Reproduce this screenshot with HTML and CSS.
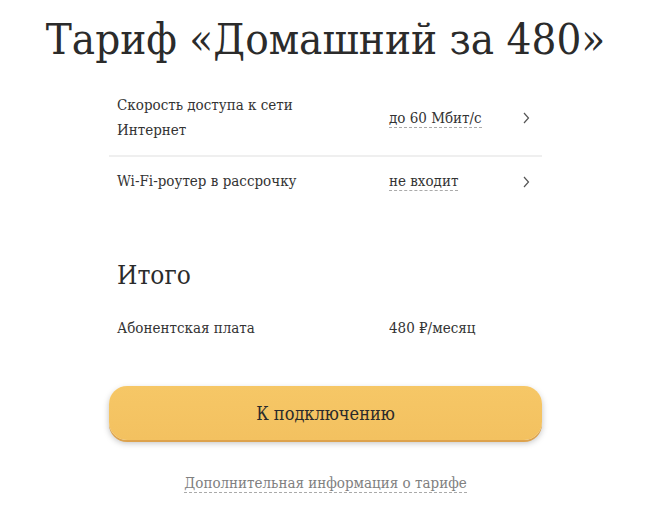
FILE: index.html
```html
<!DOCTYPE html>
<html lang="ru">
<head>
  <meta charset="UTF-8">
  <meta name="viewport" content="width=device-width, initial-scale=1.0">
  <title>Тариф «Домашний за 480»</title>
  <link rel="stylesheet" href="styles.css">
</head>
<body>
  <div class="tariff">
    <h1>Тариф «Домашний за 480»</h1>

    <div class="options">
      <div class="row">
        <span class="label">Скорость доступа к сети Интернет</span>
        <span class="value"><span class="dashed">до 60 Мбит/с</span></span>
        <svg class="chevron" width="8" height="12" viewBox="0 0 8 12"><path d="M2 1 L6.5 6 L2 11" fill="none" stroke="#555" stroke-width="1.2"/></svg>
      </div>
      <div class="row">
        <span class="label">Wi-Fi-роутер в рассрочку</span>
        <span class="value"><span class="dashed">не входит</span></span>
        <svg class="chevron" width="8" height="12" viewBox="0 0 8 12"><path d="M2 1 L6.5 6 L2 11" fill="none" stroke="#555" stroke-width="1.2"/></svg>
      </div>
    </div>

    <h2>Итого</h2>
    <div class="row total">
      <span class="label">Абонентская плата</span>
      <span class="value">480 ₽/месяц</span>
    </div>

    <button class="connect">К подключению</button>

    <div class="more"><a href="#">Дополнительная информация о тарифе</a></div>
  </div>
</body>
</html>
```

FILE: styles.css
```css
body {
  margin: 0;
  background: #fff;
  color: #333;
  font-family: "DejaVu Serif Condensed", "DejaVu Serif", serif;
}
.tariff {
  width: 433px;
  margin-left: 109px;
}
h1 {
  margin: 12px -120px 0;
  text-align: center;
  font-weight: normal;
  font-size: 43.5px;
  line-height: 54px;
  color: #2b2b2b;
}
.options {
  margin-top: 27px;
}
.row {
  display: flex;
  align-items: center;
  padding: 0 8px;
  font-size: 15px;
  line-height: 25px;
}
.options .row {
  padding-bottom: 12px;
}
.options .row + .row {
  border-top: 2px solid #efefef;
  padding-top: 12px;
}
.label {
  flex: 0 0 272px;
  box-sizing: border-box;
  padding-right: 84px;
}
.value {
  flex: 1;
}
.dashed {
  border-bottom: 1px dashed #aaa;
}
.chevron {
  margin-right: 4px;
}
h2 {
  margin: 52px 0 0 8px;
  font-weight: normal;
  font-size: 26px;
  line-height: 34px;
  color: #2b2b2b;
}
.total {
  margin-top: 24px;
}
.connect {
  display: block;
  width: 433px;
  height: 54px;
  margin-top: 45px;
  border: none;
  border-radius: 18px;
  background: linear-gradient(#f6c766, #f3c160);
  box-shadow: 0 2px 0 #dda24c, 0 3px 6px rgba(0,0,0,0.25);
  font-family: inherit;
  font-size: 18px;
  color: #2b2b2b;
}
.more {
  margin-top: 33px;
  text-align: center;
  font-size: 15px;
  line-height: 20px;
}
.more a {
  color: #808080;
  text-decoration: none;
  border-bottom: 1px dashed #aaa;
}
```
